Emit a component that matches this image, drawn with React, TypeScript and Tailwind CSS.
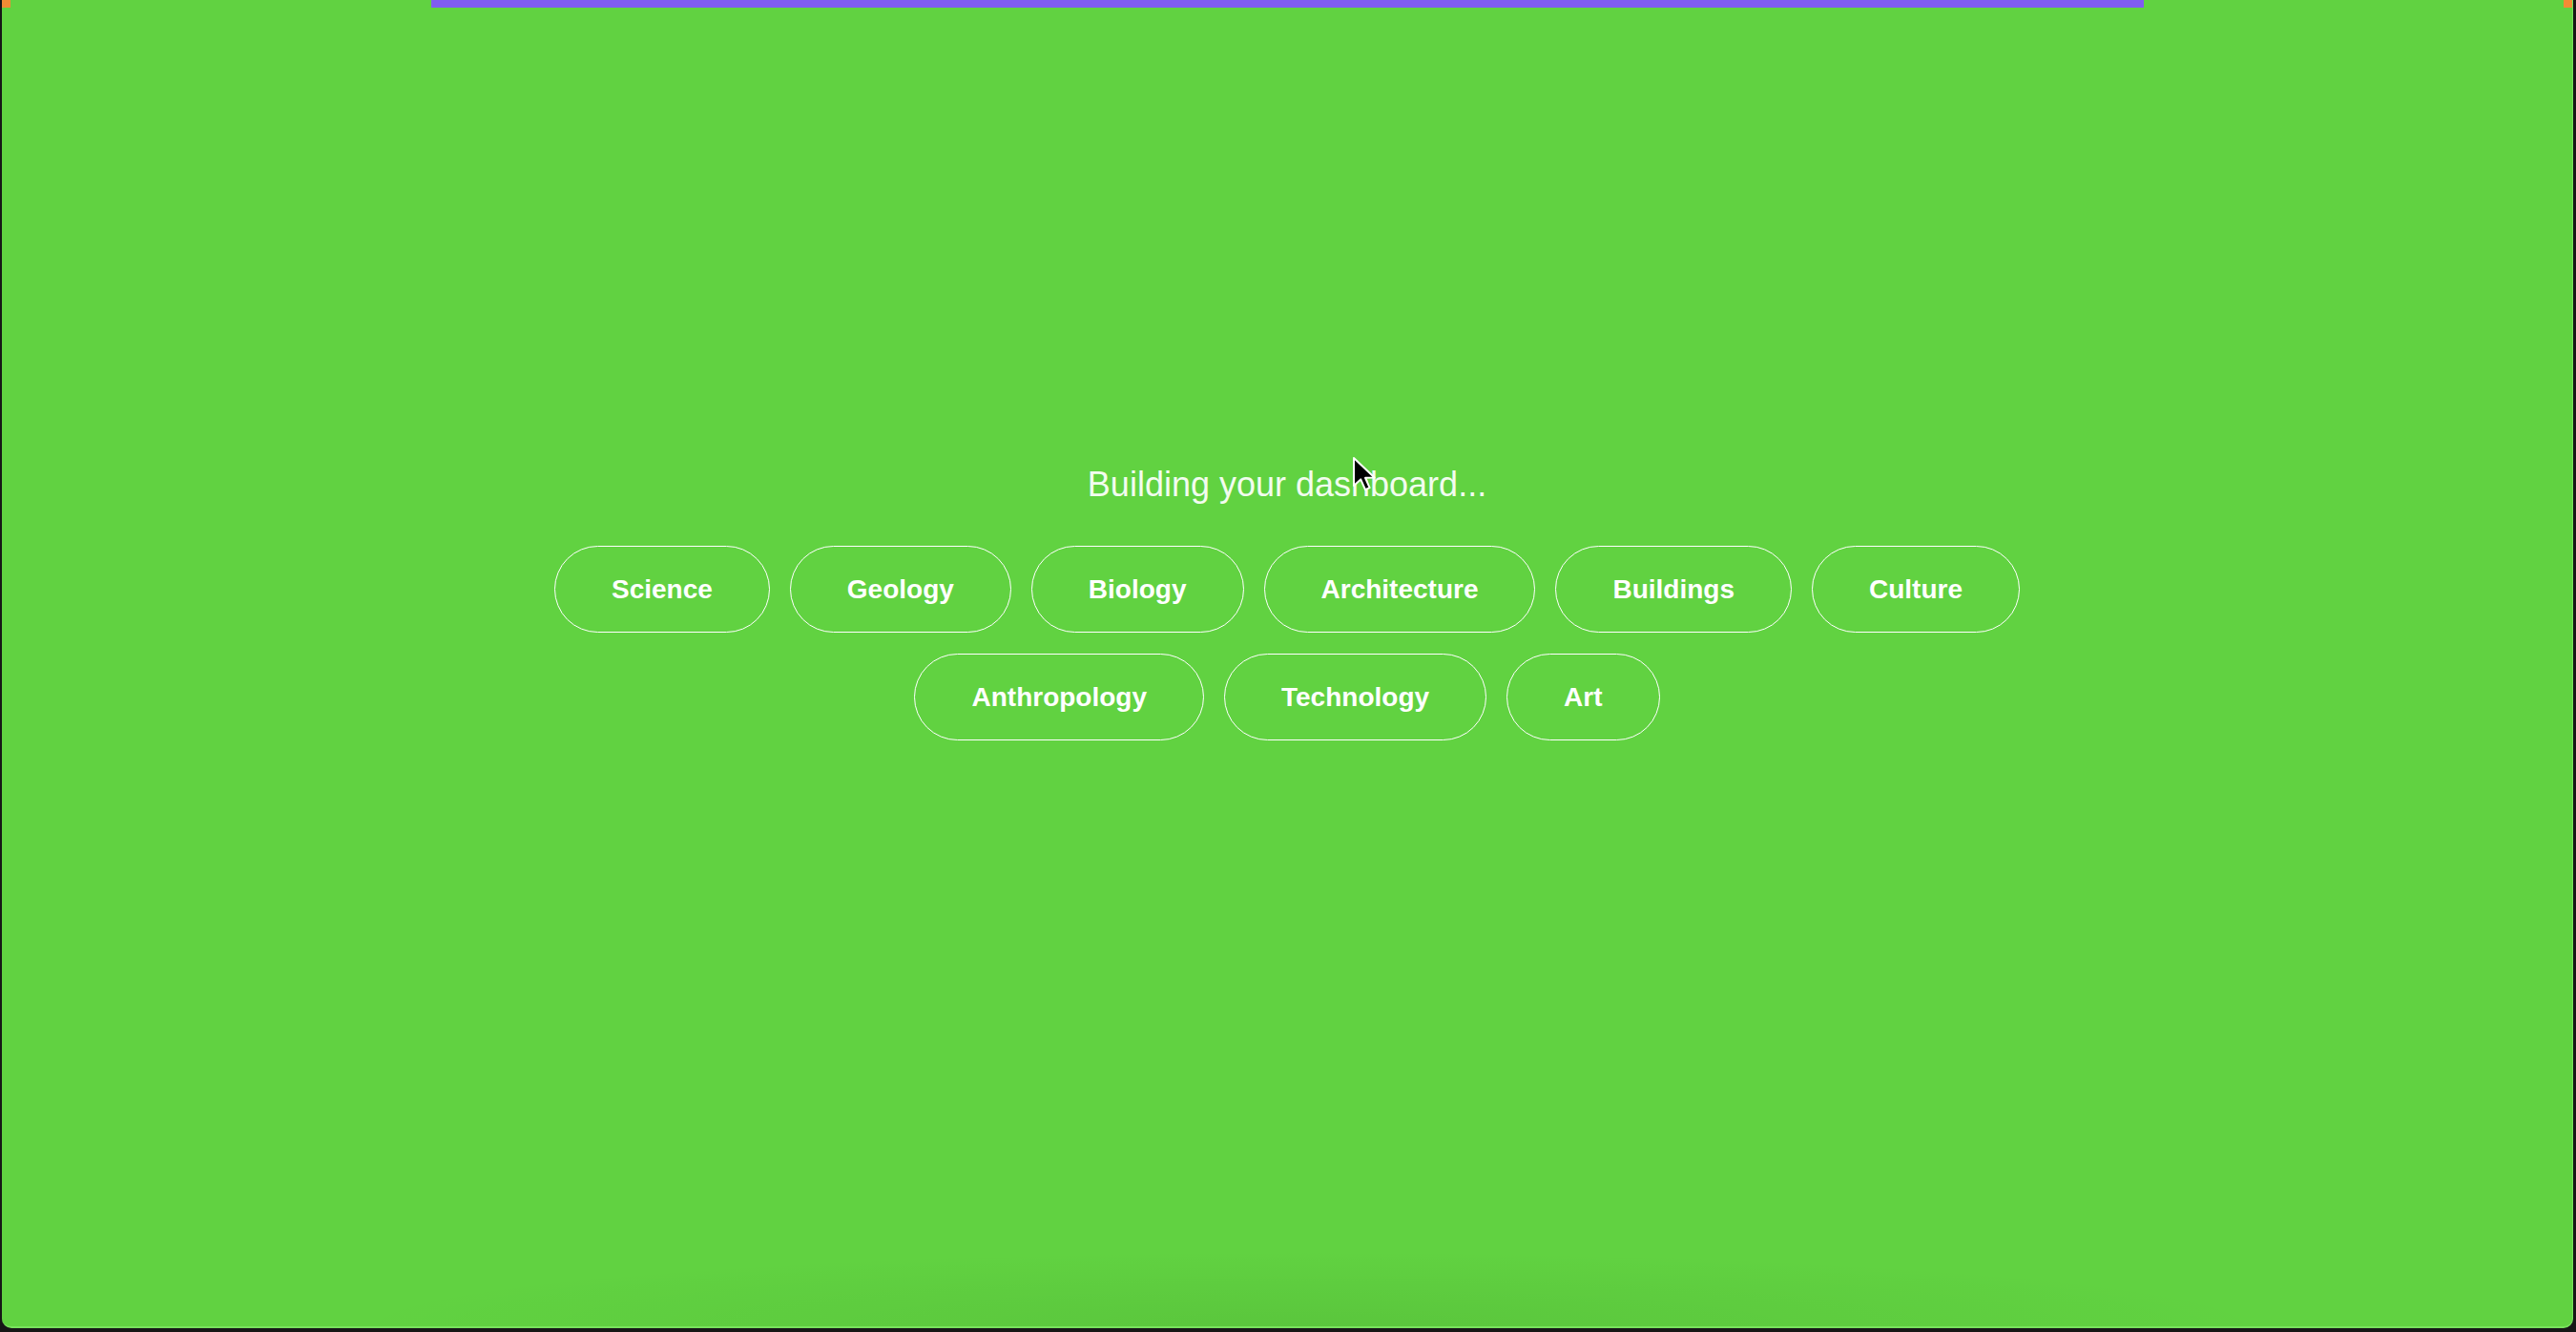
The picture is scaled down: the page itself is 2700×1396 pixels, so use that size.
const topics = [
  'Science',
  'Geology',
  'Biology',
  'Architecture',
  'Buildings',
  'Culture',
  'Anthropology',
  'Technology',
  'Art',
]

function Cursor() {
  return (
    <svg
      className="absolute left-[1415px] top-[478px]"
      width="26"
      height="38"
      viewBox="0 0 13 19"
      fill="none"
    >
      <path
        d="M1 1 L1 15.5 L4.6 12.2 L7 17.6 L9.3 16.6 L7 11.4 L11.8 11.2 Z"
        fill="#000"
        stroke="#fff"
        strokeWidth="1"
        strokeLinejoin="round"
      />
    </svg>
  )
}

export default function App() {
  return (
    <div className="h-[1396px] w-[2700px] bg-[#161616] pl-[2px] pr-[3px] pb-[4px] font-['Liberation_Sans',Arial,sans-serif]">
      <div className="relative h-full overflow-hidden rounded-b-[10px] border-r border-b-2 border-[#78e25c] bg-[#61d241]">
        <div className="flex h-2 items-start justify-between">
          <div className="h-2 w-[9px] bg-[#f38b35]" />
          <div className="h-2 w-[1795px] bg-[#805cf1]" />
          <div className="h-2 w-[9px] bg-[#f38b35]" />
        </div>

        <p className="mt-[482px] text-center text-[36px] leading-none text-[#f2fcef]">
          Building your dashboard...
        </p>

        <div className="mx-auto mt-[46px] flex max-w-[1700px] flex-wrap justify-center gap-x-[21px] gap-y-[22px]">
          {topics.map((t) => (
            <div
              key={t}
              className="flex h-[91px] items-center rounded-full border-[1.5px] border-white px-[59px] text-[28px] font-bold text-white"
            >
              {t}
            </div>
          ))}
        </div>

        <div className="pointer-events-none absolute bottom-0 left-[350px] right-[300px] h-[80px] bg-[radial-gradient(ellipse_at_bottom,rgba(0,40,0,0.07),transparent_70%)]" />

        <Cursor />
      </div>
    </div>
  )
}
